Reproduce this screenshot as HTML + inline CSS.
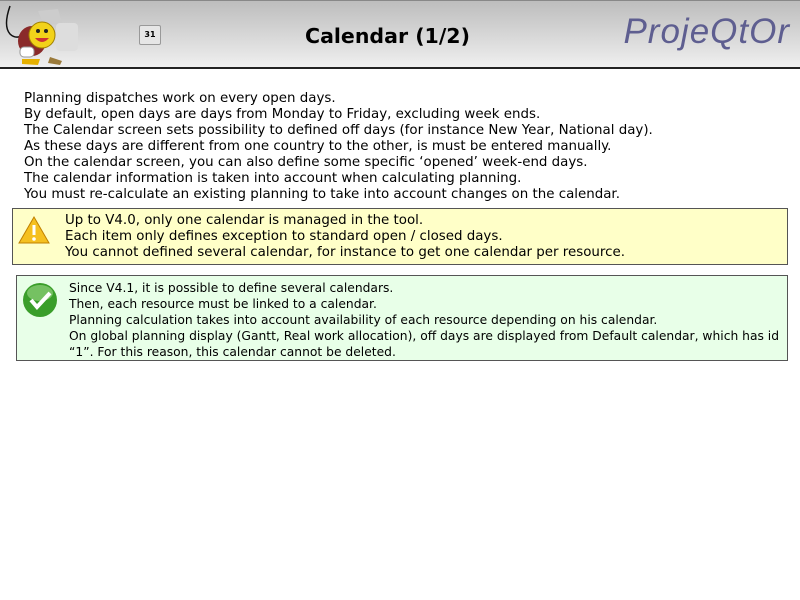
<!DOCTYPE html>
<html><head><meta charset="utf-8"><style>
body{margin:0;width:800px;height:600px;background:#fff;font-family:"DejaVu Sans","Liberation Sans",sans-serif;font-size:12px;color:#000;position:relative;overflow:hidden}
.hdr{position:absolute;left:0;top:0;width:800px;height:66px;background:linear-gradient(#bdbdbd,#efefef);border-top:1px solid #888;border-bottom:2px solid #222}
.title{position:absolute;left:0;width:775px;top:23px;text-align:center;font-weight:bold;font-size:20.5px;font-family:"DejaVu Sans",sans-serif}
.logo{position:absolute;right:10px;top:11px;font-family:"Liberation Sans",sans-serif;font-style:italic;font-size:35px;color:#5e5e90;letter-spacing:1px}
.txt{position:absolute;left:24px;top:91px;line-height:16px;font-size:13.4px;white-space:nowrap}
.box{position:absolute;border:1px solid #555;line-height:16px;font-size:13.4px;white-space:nowrap}
.y{left:12px;top:208px;width:774px;height:55px;background:#ffffc8}
.g{left:16px;top:275px;width:770px;height:84px;background:#e8ffe8}
.g div{font-size:12.3px}
</style></head><body>
<div class="hdr">
<svg style="position:absolute;left:0;top:0" width="80" height="66">
<path d="M10 5 Q3 25 10 33 Q15 38 22 35" stroke="#111" fill="none" stroke-width="1.5"/>
<path d="M38 10 L58 8 L62 22 L44 25Z" fill="#ccc"/>
<rect x="56" y="22" width="22" height="28" rx="4" fill="#ddd"/>
<ellipse cx="32" cy="40" rx="14" ry="15" fill="#8a2a2a"/>
<circle cx="42" cy="34" r="13" fill="#f2d21a" stroke="#a08000"/>
<circle cx="38" cy="30" r="2" fill="#222"/><circle cx="46" cy="30" r="2" fill="#222"/>
<path d="M35 37 Q42 45 49 37Z" fill="#c33"/>
<path d="M22 58 L40 58 L38 64 L22 63Z" fill="#e5b000"/>
<path d="M50 56 L62 60 L60 64 L48 62Z" fill="#9a7a3a"/>
<rect x="20" y="46" width="14" height="10" rx="4" fill="#fff" stroke="#999"/>
</svg>
<div style="position:absolute;left:139px;top:24px;width:20px;height:18px;background:#e6e6e6;border:1px solid #999;border-radius:2px;font-size:8px;font-weight:bold;text-align:center;line-height:18px">31</div>
<div class="title">Calendar (1/2)</div>
<div class="logo">ProjeQtOr</div>
</div>
<div class="txt">Planning dispatches work on every open days.<br>By default, open days are days from Monday to Friday, excluding week ends.<br>The Calendar screen sets possibility to defined off days (for instance New Year, National day).<br>As these days are different from one country to the other, is must be entered manually.<br>On the calendar screen, you can also define some specific ‘opened’ week-end days.<br>The calendar information is taken into account when calculating planning.<br>You must re-calculate an existing planning to take into account changes on the calendar.</div>
<div class="box y">
<svg style="position:absolute;left:5px;top:6px" width="32" height="30"><path d="M16 2 L31 28 L1 28Z" fill="#f5c020" stroke="#c08000"/><rect x="14.5" y="10" width="3" height="10" fill="#fff"/><circle cx="16" cy="24" r="1.8" fill="#fff"/></svg>
<div style="position:absolute;left:52px;top:4px">Up to V4.0, only one calendar is managed in the tool.<br>Each item only defines exception to standard open / closed days.<br>You cannot defined several calendar, for instance to get one calendar per resource.</div>
</div>
<div class="box g">
<svg style="position:absolute;left:5px;top:6px" width="36" height="36"><circle cx="18" cy="18" r="17" fill="#3a9e2a"/><ellipse cx="18" cy="11" rx="13" ry="8" fill="#8ed07a" opacity=".7"/><path d="M9 18 L15 25 L28 11" stroke="#fff" stroke-width="4" fill="none"/></svg>
<div style="position:absolute;left:52px;top:4px">Since V4.1, it is possible to define several calendars.<br>Then, each resource must be linked to a calendar.<br>Planning calculation takes into account availability of each resource depending on his calendar.<br>On global planning display (Gantt, Real work allocation), off days are displayed from Default calendar, which has id<br>“1”. For this reason, this calendar cannot be deleted.</div>
</div>
</body></html>
